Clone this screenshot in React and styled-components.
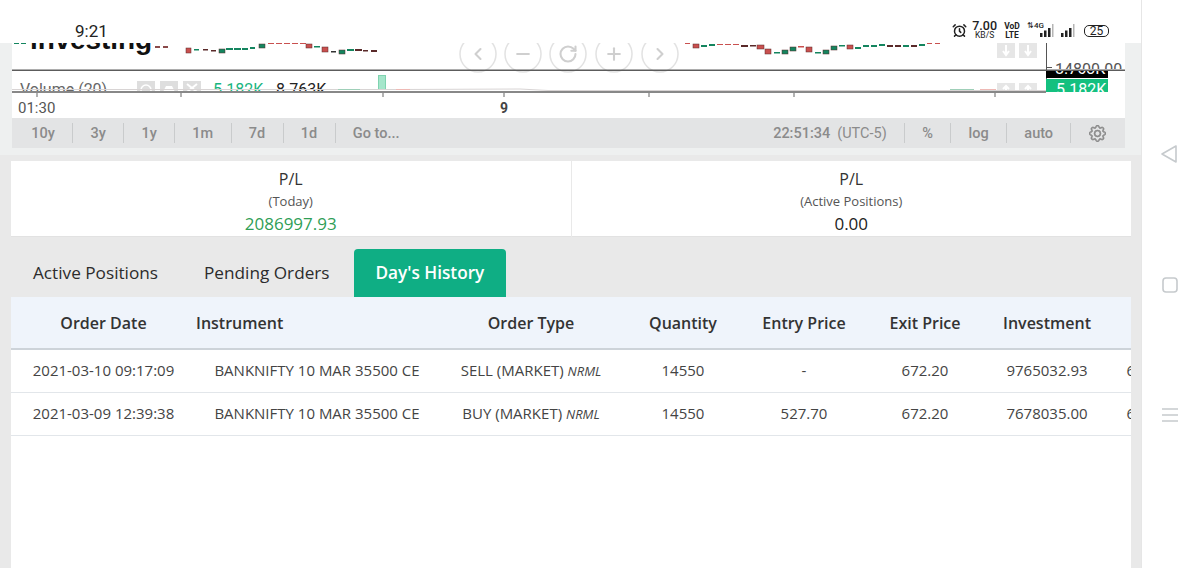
import styled, { createGlobalStyle } from "styled-components";
import { AlarmClock, ChevronLeft, ChevronRight, Minus, Plus, RotateCw } from "lucide-react";
import { BsGear } from "react-icons/bs";

const GlobalStyle = createGlobalStyle`
  html, body {
    margin: 0;
    padding: 0;
    background: #fff;
  }
  * {
    box-sizing: border-box;
  }
`;

const Shell = styled.div`
  display: flex;
  width: 1200px;
  height: 568px;
  overflow: hidden;
  background: #fff;
  font-family: "Open Sans", sans-serif;
`;

const Main = styled.div`
  display: flex;
  flex-direction: column;
  width: 1142px;
  border-right: 1px solid #e6e6e6;
`;

const StatusBar = styled.div`
  display: flex;
  justify-content: space-between;
  align-items: center;
  height: 43px;
  padding: 18px 32px 0 75px;
  background: #fff;
  color: #222;
  font-family: Roboto, sans-serif;
`;

const Clock = styled.span`
  font-size: 17px;
`;

const StatusIcons = styled.div`
  display: flex;
  align-items: center;
`;

const Speed = styled.div`
  display: flex;
  flex-direction: column;
  align-items: center;
  margin: 0 7px 0 5px;
  font-size: 12.5px;
  font-weight: 500;
  line-height: 9.5px;
  & small {
    font-size: 8.5px;
    font-weight: 400;
  }
`;

const Volte = styled.div`
  display: flex;
  flex-direction: column;
  align-items: center;
  width: 16px;
  margin-right: 7px;
  font-size: 8.5px;
  font-weight: 700;
  line-height: 9px;
`;

const NetLabel = styled.span`
  align-self: flex-start;
  width: 14px;
  margin-right: -1px;
  font-size: 8px;
  font-weight: 500;
  line-height: 10px;
  white-space: nowrap;
`;

const BarsIcon = styled.svg`
  margin-left: ${(p) => p.$gap || 0}px;
`;

const Battery = styled.span`
  display: flex;
  align-items: center;
  justify-content: center;
  width: 25px;
  height: 12px;
  margin-left: 9px;
  border: 1.5px solid #222;
  border-radius: 5px;
  font-size: 12px;
`;

const ChartArea = styled.div`
  display: flex;
  flex-direction: column;
  height: 112px;
  padding: 0 16px 6px 12px;
  background: #eef0f0;
`;

const ChartSvg = styled.svg`
  display: block;
  flex: none;
  background: #fff;
  font-family: Roboto, sans-serif;
`;

const RangeBar = styled.div`
  display: flex;
  align-items: center;
  justify-content: space-between;
  height: 30px;
  padding: 0 2px;
  background: #e3e4e5;
  color: #8b8b8b;
  font-family: Roboto, sans-serif;
  font-size: 14.5px;
  font-weight: 500;
`;

const RangeGroup = styled.div`
  display: flex;
  align-items: center;
`;

const RangeItem = styled.span`
  display: flex;
  align-items: center;
  height: 20px;
  padding: 0 17.3px;
  border-right: ${(p) => (p.$last ? "none" : "1px solid #c9cbcc")};
  & em {
    margin-left: 7px;
    font-style: normal;
    font-weight: 400;
  }
`;

const Gear = styled(BsGear)`
  stroke: currentColor;
  stroke-width: 0.6px;
`;

const Page = styled.div`
  display: flex;
  flex: 1;
  flex-direction: column;
  min-height: 0;
  padding: 6px 10px 0 11px;
  background: #e9e9e9;
`;

const SummaryRow = styled.div`
  display: flex;
  gap: 1px;
  height: 76px;
`;

const SummaryCard = styled.div`
  display: flex;
  flex: 1;
  flex-direction: column;
  align-items: center;
  padding-top: 8px;
  background: #fff;
  border-bottom: 1px solid #e2e2e2;
  color: #333;
`;

const CardTitle = styled.div`
  font-size: 16px;
  line-height: 21px;
`;

const CardNote = styled.div`
  margin-top: 1px;
  color: #555;
  font-size: 13px;
  line-height: 20px;
`;

const CardValue = styled.div`
  margin-top: 1px;
  color: ${(p) => (p.$gain ? "#2f9e56" : "#222")};
  font-size: 17px;
  line-height: 23px;
`;

const Tabs = styled.div`
  display: flex;
  gap: 2px;
  height: 48px;
  margin-top: 12px;
`;

const Tab = styled.div`
  display: flex;
  align-items: center;
  padding: 0 22px 2px;
  border-radius: 4px 4px 0 0;
  background: ${(p) => (p.$active ? "#0fae84" : "transparent")};
  color: ${(p) => (p.$active ? "#fff" : "#2c2c2c")};
  font-size: 17.2px;
  font-weight: ${(p) => (p.$active ? 600 : 400)};
`;

const TablePanel = styled.div`
  flex: 1;
  overflow: hidden;
  background: #fff;
`;

const Table = styled.table`
  width: 1179px;
  border-collapse: collapse;
  table-layout: fixed;
`;

const HeadCell = styled.th`
  height: 52px;
  padding: 0;
  background: #eff4fb;
  border-bottom: 2px solid #cdd3d9;
  color: #333;
  font-size: 16px;
  font-weight: 600;
  text-align: ${(p) => p.$align || "center"};
`;

const Cell = styled.td`
  height: 43px;
  padding: 0 0 2px;
  border-bottom: 1px solid #e2e6ea;
  color: #444;
  font-size: 15px;
  text-align: center;
  white-space: nowrap;
  & i {
    font-size: 13px;
  }
`;

const NavBar = styled.div`
  display: flex;
  flex: 1;
  flex-direction: column;
  align-items: center;
  justify-content: center;
  gap: 112px;
  padding-right: 3px;
  background: #fff;
  color: #c6cacd;
`;

const columns = [185, 242, 186, 118, 124, 118, 126, 80];

const headers = [
  { label: "Order Date" },
  { label: "Instrument", align: "left" },
  { label: "Order Type" },
  { label: "Quantity" },
  { label: "Entry Price" },
  { label: "Exit Price" },
  { label: "Investment" },
  { label: "" },
];

const orders = [
  {
    date: "2021-03-10 09:17:09",
    type: "SELL (MARKET)",
    entry: "-",
    investment: "9765032.93",
  },
  {
    date: "2021-03-09 12:39:38",
    type: "BUY (MARKET)",
    entry: "527.70",
    investment: "7678035.00",
  },
];

const RED = "#c9504f";
const GREEN = "#14855f";

// [x, y, width, height, colour]
const candles = [
  [14, 43, 5, 1, GREEN], [21, 43, 5, 1, GREEN], [155, 46, 5, 2, "#8a4a4a"], [163, 46, 5, 2, "#8a4a4a"],
  [186, 48, 5, 5, RED], [194, 49, 5, 1.5, GREEN], [203, 49, 5, 1.5, "#5a2a2a"], [211, 50, 5, 1.5, "#5a2a2a"],
  [219, 49, 6, 4, GREEN], [226, 48, 7, 2, GREEN], [234, 48, 7, 2, GREEN], [242, 48, 6, 2, GREEN],
  [250, 47, 5, 2, GREEN], [259, 44, 6, 4, GREEN], [268, 43, 6, 1, RED], [276, 43, 6, 1, RED],
  [284, 43, 6, 1, RED], [292, 43, 6, 1, RED], [300, 43, 6, 1, RED], [306, 44, 6, 4, RED],
  [314, 46, 6, 1.5, GREEN], [322, 47, 6, 5, RED], [331, 51, 5, 1.5, "#333"], [339, 50, 6, 4, GREEN],
  [347, 49, 7, 2, GREEN], [355, 49, 7, 2, "#5a2a2a"], [363, 50, 5, 1.5, "#5a2a2a"], [371, 50, 6, 2, "#5a2a2a"],
  [685, 43, 5, 1, RED], [693, 44, 6, 4, RED], [701, 45, 6, 2, GREEN], [709, 44, 6, 2, GREEN],
  [717, 44, 6, 1, RED], [725, 44, 6, 1, RED], [733, 44, 6, 1, RED], [741, 45, 7, 2, "#5a2a2a"],
  [750, 45, 6, 1.5, "#5a2a2a"], [757, 45, 7, 4, RED], [765, 49, 6, 5, RED], [774, 52, 6, 1.5, GREEN],
  [782, 50, 6, 4, GREEN], [790, 47, 6, 4, GREEN], [798, 46, 6, 1.5, RED], [806, 47, 6, 5, RED],
  [815, 52, 6, 1.5, GREEN], [823, 50, 6, 4, GREEN], [831, 46, 6, 4, GREEN], [839, 45, 6, 1.5, GREEN],
  [847, 45, 6, 4, RED], [855, 47, 6, 2, GREEN], [863, 45, 6, 2, GREEN], [871, 45, 6, 2, GREEN],
  [879, 44, 6, 2, GREEN], [887, 45, 6, 2, "#5a2a2a"], [895, 45, 6, 2, "#5a2a2a"], [903, 45, 6, 2, GREEN],
  [911, 45, 6, 2, "#5a2a2a"], [919, 44, 6, 2, GREEN], [927, 43, 5, 1, RED], [935, 43, 5, 1, RED],
];

const ticks = [37, 181, 383, 504, 649, 794, 995];
const zoomButtons = [
  { x: 478, Icon: ChevronLeft },
  { x: 523, Icon: Minus },
  { x: 568, Icon: RotateCw },
  { x: 614, Icon: Plus },
  { x: 660, Icon: ChevronRight },
];

function SignalBars({ gap }) {
  return (
    <BarsIcon $gap={gap} width="14" height="15" viewBox="0 0 14 15">
      <rect x="0" y="10" width="2.5" height="4" fill="#222" />
      <rect x="4" y="7.5" width="2.5" height="6.5" fill="#222" />
      <rect x="8" y="5" width="2.5" height="9" fill="#222" />
      <rect x="12" y="1" width="1.5" height="13" fill="#b5b5b5" />
    </BarsIcon>
  );
}

function ChartCanvas() {
  return (
    <ChartSvg width="1113" height="75" viewBox="12 43 1113 75">
      <defs>
        <clipPath id="upper">
          <rect x="12" y="43" width="1113" height="26" />
        </clipPath>
        <clipPath id="lower">
          <rect x="12" y="71" width="1113" height="20" />
        </clipPath>
        <clipPath id="blackBox">
          <rect x="1046" y="71" width="62" height="7" />
        </clipPath>
        <clipPath id="greenBox">
          <rect x="1046" y="79" width="62" height="13" />
        </clipPath>
      </defs>

      <text x="30" y="48.5" clipPath="url(#upper)" fontFamily="Liberation Sans" fontSize="28" fontWeight="700" fill="#111" textLength="122">
        investing
      </text>

      {candles.map(([x, y, w, h, color]) => (
        <rect key={x} x={x} y={y} width={w} height={h} fill={color} stroke={h > 3 ? "#5a2a2a" : "none"} strokeWidth="0.5" />
      ))}

      {zoomButtons.map(({ x, Icon }) => (
        <g key={x}>
          <circle cx={x} cy="54" r="18" fill="#fff" fillOpacity="0.7" stroke="#e2e2e2" strokeWidth="1.5" />
          <Icon x={x - 10} y="44" width="20" height="20" color="#cfcfcf" strokeWidth="2.5" />
        </g>
      ))}

      {[997, 1019].map((x) => (
        <g key={x}>
          <rect x={x} y="43" width="18" height="15" fill="#e6e6e6" />
          <path d={`M${x + 9} 45v9m-3-3l3 4 3-4`} stroke="#fff" strokeWidth="2" fill="none" />
          <rect x={x} y="83" width="18" height="9" fill="#e6e6e6" />
          <path d={`M${x + 9} 92v-5m-3 2l3-3 3 3`} stroke="#fff" strokeWidth="2" fill="none" />
        </g>
      ))}

      <g clipPath="url(#upper)">
        <text x="1055" y="74.5" fontSize="16" fill="#555">14800.00</text>
      </g>
      <rect x="1047" y="67" width="5" height="1" fill="#555" />
      <rect x="12" y="69.5" width="1113" height="1.5" fill="#5c5c5c" />
      <rect x="1046" y="43" width="1" height="49" fill="#555" />

      <g clipPath="url(#lower)" fontSize="16">
        <text x="20" y="95" fill="#666">Volume (20)</text>
        <rect x="137" y="81" width="18" height="11" fill="#dedede" />
        <circle cx="146" cy="90" r="5" fill="none" stroke="#fff" strokeWidth="1.5" />
        <rect x="160" y="81" width="18" height="11" fill="#dedede" />
        <path d="M163 92l3-6h6l3 6z" fill="#fff" />
        <rect x="183" y="81" width="18" height="11" fill="#dedede" />
        <path d="M187 84l10 8M197 84l-10 8" stroke="#fff" strokeWidth="2" />
        <text x="213" y="95" fill="#19b57f">5.182K</text>
        <text x="276" y="95" fill="#222">8.763K</text>
      </g>
      <rect x="378.5" y="75.5" width="7" height="14" fill="#a5e6cb" stroke="#7fd3b0" />
      <path d="M12 89.5H338h40h20L520 89l28 1.5H1046" stroke="#d8d4d4" strokeWidth="1" fill="none" />
      <path d="M338 89.5h22M950 89.5h24" stroke="#9fcfb8" strokeWidth="1" fill="none" />
      <path d="M396 89.5h14M980 89.5h16" stroke="#eeb9b5" strokeWidth="1" fill="none" />
      <rect x="12" y="91" width="1034" height="2" fill="#888" />
      {ticks.map((x) => (
        <rect key={x} x={x - 0.5} y="93" width="1" height="4" fill="#666" />
      ))}

      <rect x="1046" y="71" width="62" height="7" fill="#000" />
      <text x="1055" y="74" clipPath="url(#blackBox)" fontSize="16" fill="#fff">8.763K</text>
      <rect x="1046" y="79" width="62" height="13" fill="#14c07f" />
      <text x="1056" y="95" clipPath="url(#greenBox)" fontSize="16" fill="#fff">5.182K</text>

      <text x="18" y="112.5" fontSize="15" fill="#555">01:30</text>
      <text x="504" y="112.5" fontSize="14" fontWeight="700" fill="#444" textAnchor="middle">9</text>
    </ChartSvg>
  );
}

export default function App() {
  return (
    <>
      <GlobalStyle />
      <Shell>
        <Main>
          <StatusBar>
            <Clock>9:21</Clock>
            <StatusIcons>
              <AlarmClock size={15} strokeWidth={2.4} />
              <Speed>
                7.00
                <small>KB/S</small>
              </Speed>
              <Volte>
                <span>VoD</span>
                <span>LTE</span>
              </Volte>
              <NetLabel>⇅4G</NetLabel>
              <SignalBars />
              <SignalBars gap={7} />
              <Battery>25</Battery>
            </StatusIcons>
          </StatusBar>

          <ChartArea>
            <ChartCanvas />
            <RangeBar>
              <RangeGroup>
                {["10y", "3y", "1y", "1m", "7d", "1d"].map((r) => (
                  <RangeItem key={r}>{r}</RangeItem>
                ))}
                <RangeItem $last>Go to...</RangeItem>
              </RangeGroup>
              <RangeGroup>
                <RangeItem>
                  22:51:34<em>(UTC-5)</em>
                </RangeItem>
                <RangeItem>%</RangeItem>
                <RangeItem>log</RangeItem>
                <RangeItem>auto</RangeItem>
                <RangeItem $last>
                  <Gear size={17} />
                </RangeItem>
              </RangeGroup>
            </RangeBar>
          </ChartArea>

          <Page>
            <SummaryRow>
              <SummaryCard>
                <CardTitle>P/L</CardTitle>
                <CardNote>(Today)</CardNote>
                <CardValue $gain>2086997.93</CardValue>
              </SummaryCard>
              <SummaryCard>
                <CardTitle>P/L</CardTitle>
                <CardNote>(Active Positions)</CardNote>
                <CardValue>0.00</CardValue>
              </SummaryCard>
            </SummaryRow>

            <Tabs>
              <Tab>Active Positions</Tab>
              <Tab>Pending Orders</Tab>
              <Tab $active>Day's History</Tab>
            </Tabs>

            <TablePanel>
              <Table>
                <colgroup>
                  {columns.map((w, i) => (
                    <col key={i} width={w} />
                  ))}
                </colgroup>
                <thead>
                  <tr>
                    {headers.map((h, i) => (
                      <HeadCell key={i} $align={h.align}>
                        {h.label}
                      </HeadCell>
                    ))}
                  </tr>
                </thead>
                <tbody>
                  {orders.map((o) => (
                    <tr key={o.date}>
                      <Cell>{o.date}</Cell>
                      <Cell>BANKNIFTY 10 MAR 35500 CE</Cell>
                      <Cell>
                        {o.type} <i>NRML</i>
                      </Cell>
                      <Cell>14550</Cell>
                      <Cell>{o.entry}</Cell>
                      <Cell>672.20</Cell>
                      <Cell>{o.investment}</Cell>
                      <Cell>672.20</Cell>
                    </tr>
                  ))}
                </tbody>
              </Table>
            </TablePanel>
          </Page>
        </Main>

        <NavBar>
          <svg width="18" height="20" viewBox="0 0 18 20" fill="none" stroke="currentColor" strokeWidth="1.6">
            <path d="M15 2v16L1 10z" strokeLinejoin="round" />
          </svg>
          <svg width="18" height="18" viewBox="0 0 18 18" fill="none" stroke="currentColor" strokeWidth="1.6">
            <rect x="2" y="2" width="14" height="14" rx="3" />
          </svg>
          <svg width="18" height="18" viewBox="0 0 18 18" fill="none" stroke="currentColor" strokeWidth="1.5">
            <path d="M1 3h16M1 9h16M1 15h16" />
          </svg>
        </NavBar>
      </Shell>
    </>
  );
}
